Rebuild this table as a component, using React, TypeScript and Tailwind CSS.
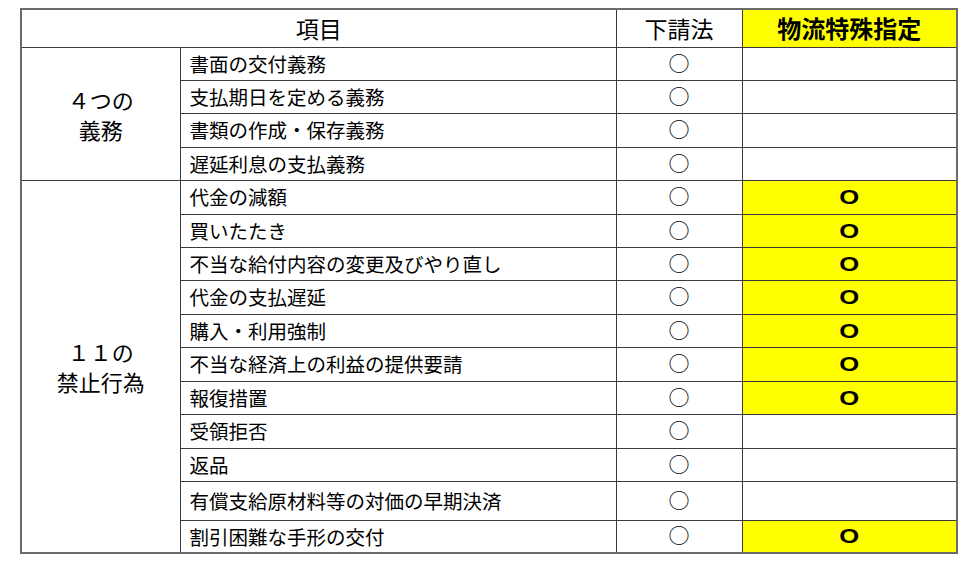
import React from "react";

const rows4 = [
  "書面の交付義務",
  "支払期日を定める義務",
  "書類の作成・保存義務",
  "遅延利息の支払義務",
];

const rows11: { t: string; y: boolean; h: string }[] = [
  { t: "代金の減額", y: true, h: "h-[34px]" },
  { t: "買いたたき", y: true, h: "h-[33px]" },
  { t: "不当な給付内容の変更及びやり直し", y: true, h: "h-[33px]" },
  { t: "代金の支払遅延", y: true, h: "h-[34px]" },
  { t: "購入・利用強制", y: true, h: "h-[33px]" },
  { t: "不当な経済上の利益の提供要請", y: true, h: "h-[34px]" },
  { t: "報復措置", y: true, h: "h-[33px]" },
  { t: "受領拒否", y: false, h: "h-[34px]" },
  { t: "返品", y: false, h: "h-[33px]" },
  { t: "有償支給原材料等の対価の早期決済", y: false, h: "h-[39px]" },
  { t: "割引困難な手形の交付", y: true, h: "h-[33px]" },
];

const heights4 = ["h-[33px]", "h-[33px]", "h-[34px]", "h-[33px]"];

const cell = "border border-[#3a3a3a] p-0";

function Circle() {
  return (
    <span className="inline-block text-[21px] leading-none font-['Noto_Sans_CJK_JP',sans-serif] text-black">
      ○
    </span>
  );
}

function BoldO() {
  return (
    <span className="inline-block scale-x-[1.22] text-[21px] leading-none font-bold font-['Liberation_Sans',Arial,sans-serif] text-black">
      O
    </span>
  );
}

export default function App() {
  return (
    <div className="w-[977px] h-[566px] bg-white pt-[8px] pl-[20px] font-['Noto_Sans_CJK_JP','Noto_Sans',sans-serif] text-black">
      <table className="table-fixed border-collapse border-2 border-[#6b6b6b] w-[936px]">
        <colgroup>
          <col className="w-[159px]" />
          <col className="w-[436px]" />
          <col className="w-[126px]" />
          <col className="w-[215px]" />
        </colgroup>
        <tbody>
          <tr className="h-[38px]">
            <td colSpan={2} className={`${cell} text-center text-[23px] leading-none`}>
              項目
            </td>
            <td className={`${cell} text-center text-[23px] leading-none`}>下請法</td>
            <td className={`${cell} bg-[#ffff00] text-center text-[24px] font-bold leading-none`}>
              物流特殊指定
            </td>
          </tr>
          {rows4.map((t, i) => (
            <tr key={t} className={heights4[i]}>
              {i === 0 && (
                <td rowSpan={4} className={`${cell} text-center text-[22px] leading-[30px]`}>
                  <div>４つの</div>
                  <div>義務</div>
                </td>
              )}
              <td className={`${cell} pl-[9px] text-[19.5px] leading-none`}>{t}</td>
              <td className={`${cell} text-center`}>
                <Circle />
              </td>
              <td className={cell}></td>
            </tr>
          ))}
          {rows11.map((r, i) => (
            <tr key={r.t} className={r.h}>
              {i === 0 && (
                <td rowSpan={11} className={`${cell} text-center text-[22px] leading-[30px]`}>
                  <div>１１の</div>
                  <div>禁止行為</div>
                </td>
              )}
              <td className={`${cell} pl-[9px] text-[19.5px] leading-none`}>{r.t}</td>
              <td className={`${cell} text-center`}>
                <Circle />
              </td>
              <td className={`${cell} text-center ${r.y ? "bg-[#ffff00]" : ""}`}>
                {r.y && <BoldO />}
              </td>
            </tr>
          ))}
        </tbody>
      </table>
    </div>
  );
}
